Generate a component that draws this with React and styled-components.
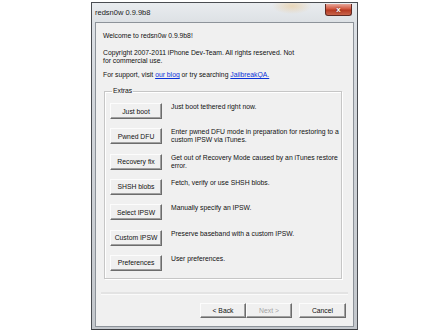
import React from 'react'
import styled, { createGlobalStyle } from 'styled-components'

const Global = createGlobalStyle`
    html, body{
        margin: 0;
        padding: 0;
        background: #fff;
    }
    body{
        font-family: "Liberation Sans", Arial, sans-serif;
        font-size: 6.8px;
        color: #111;
    }
`

const Window = styled.div`
    margin: 2px 0 0 91px;
    width: 267px;
    height: 328px;
    box-sizing: border-box;
    border: 1px solid #4a4d52;
    border-bottom: 1px solid #3a3c40;
    background: linear-gradient(180deg, #dfe3e8 0%, #d2d6db 30%, #c3c7cc 100%);
    display: flex;
    flex-direction: column;
    position: relative;
    .titlebar{
        height: 19px;
        display: flex;
        align-items: center;
        padding-left: 3px;
        font-size: 7.5px;
        color: #222;
        background: radial-gradient(ellipse 20px 8px at 200px 3px, rgba(235, 190, 120, 0.45), transparent),
                    linear-gradient(180deg, #e9ecef, #dde1e5);
    }
    .close{
        position: absolute;
        top: 1px;
        right: 5px;
        width: 27px;
        height: 12px;
        box-sizing: border-box;
        border: 1px solid #5e2a22;
        border-top: none;
        border-radius: 0 0 3px 3px;
        background: linear-gradient(180deg, #e8a79a 0%, #d2573f 45%, #b53a22 55%, #c8644b 100%);
        color: #fff;
        font-size: 8px;
        font-weight: bold;
        display: flex;
        align-items: center;
        justify-content: center;
        text-shadow: 0 0 2px #5a1a10;
    }
`

const Client = styled.div`
    flex: 1;
    margin: 0 3px 2px 3px;
    border: 1px solid #8d939a;
    background: #f0f0f0;
    display: flex;
    flex-direction: column;
    padding: 9px 11px 0 7px;
    box-sizing: border-box;
    p{
        margin: 0;
        line-height: 8px;
    }
    .welcome{ margin-bottom: 9px; }
    .copy{ margin-bottom: 6px; width: 196px; }
    a{
        color: #0b32d8;
        text-decoration: underline;
    }
`

const Group = styled.fieldset`
    margin: 8px 0 0 1px;
    padding: 5px 0 5px 5px;
    border: 1px solid #c6c6c6;
    box-shadow: inset 1px 1px 0 #fff, 1px 1px 0 #fff;
    height: 192px;
    box-sizing: border-box;
    legend{
        padding: 0 1px;
        margin-left: 2px;
        line-height: 8px;
    }
    .rows{
        display: flex;
        flex-direction: column;
        gap: 9.33px;
        margin-top: 3px;
    }
`

const Row = styled.div`
    display: flex;
    gap: 9px;
    .desc{
        flex: 1;
        line-height: 8px;
        padding-right: 2px;
    }
`

const Button = styled.div`
    width: ${p => p.$w || 52}px;
    height: ${p => p.$h || 16}px;
    flex-shrink: 0;
    box-sizing: border-box;
    border: 1px solid;
    border-color: #fcfcfc #6c6c6c #6c6c6c #fcfcfc;
    box-shadow: inset -1px -1px 0 #a0a0a0;
    background: #f0f0f0;
    display: flex;
    align-items: center;
    justify-content: center;
    color: ${p => p.$disabled ? '#a4a4a4' : '#111'};
`

const Separator = styled.div`
    height: 2px;
    margin: 13px -6px 0 -2px;
    background: #e3e3e3;
    border-bottom: 1px solid #fafafa;
`

const Footer = styled.div`
    display: flex;
    justify-content: flex-end;
    margin-top: 8px;
    margin-right: -4px;
    .pair{
        display: flex;
        margin-right: 7px;
    }
`

const extras = [
    ['Just boot', 'Just boot tethered right now.'],
    ['Pwned DFU', 'Enter pwned DFU mode in preparation for restoring to a custom IPSW via iTunes.'],
    ['Recovery fix', 'Get out of Recovery Mode caused by an iTunes restore error.'],
    ['SHSH blobs', 'Fetch, verify or use SHSH blobs.'],
    ['Select IPSW', 'Manually specify an IPSW.'],
    ['Custom IPSW', 'Preserve baseband with a custom IPSW.'],
    ['Preferences', 'User preferences.'],
]

export default function App() {
  return (
    <>
        <Global />
        <Window>
            <div className="titlebar">redsn0w 0.9.9b8</div>
            <div className="close">x</div>
            <Client>
                <p className="welcome">Welcome to redsn0w 0.9.9b8!</p>
                <p className="copy">Copyright 2007-2011 iPhone Dev-Team. All rights reserved. Not for commercial use.</p>
                <p>For support, visit <a>our blog</a> or try searching <a>JailbreakQA.</a></p>
                <Group>
                    <legend>Extras</legend>
                    <div className="rows">
                        {extras.map(([label, desc]) => (
                            <Row key={label}>
                                <Button>{label}</Button>
                                <div className="desc">{desc}</div>
                            </Row>
                        ))}
                    </div>
                </Group>
                <Separator />
                <Footer>
                    <div className="pair">
                        <Button $w={46} $h={15}>&lt; Back</Button>
                        <Button $w={46} $h={15} $disabled>Next &gt;</Button>
                    </div>
                    <Button $w={47} $h={15}>Cancel</Button>
                </Footer>
            </Client>
        </Window>
    </>
  )
}
